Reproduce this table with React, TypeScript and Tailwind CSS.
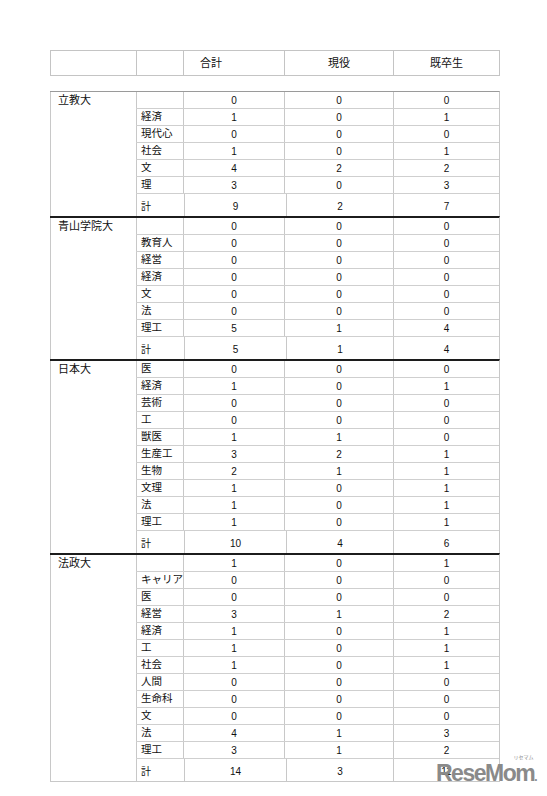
import React from "react";

type Row = [string, number, number, number];

type Section = {
  name: string;
  rows: Row[];
  total: [number, number, number];
};

const sections: Section[] = [
  {
    name: "立教大",
    rows: [
      ["", 0, 0, 0],
      ["経済", 1, 0, 1],
      ["現代心", 0, 0, 0],
      ["社会", 1, 0, 1],
      ["文", 4, 2, 2],
      ["理", 3, 0, 3],
    ],
    total: [9, 2, 7],
  },
  {
    name: "青山学院大",
    rows: [
      ["", 0, 0, 0],
      ["教育人", 0, 0, 0],
      ["経営", 0, 0, 0],
      ["経済", 0, 0, 0],
      ["文", 0, 0, 0],
      ["法", 0, 0, 0],
      ["理工", 5, 1, 4],
    ],
    total: [5, 1, 4],
  },
  {
    name: "日本大",
    rows: [
      ["医", 0, 0, 0],
      ["経済", 1, 0, 1],
      ["芸術", 0, 0, 0],
      ["工", 0, 0, 0],
      ["獣医", 1, 1, 0],
      ["生産工", 3, 2, 1],
      ["生物", 2, 1, 1],
      ["文理", 1, 0, 1],
      ["法", 1, 0, 1],
      ["理工", 1, 0, 1],
    ],
    total: [10, 4, 6],
  },
  {
    name: "法政大",
    rows: [
      ["", 1, 0, 1],
      ["キャリア", 0, 0, 0],
      ["医", 0, 0, 0],
      ["経営", 3, 1, 2],
      ["経済", 1, 0, 1],
      ["工", 1, 0, 1],
      ["社会", 1, 0, 1],
      ["人間", 0, 0, 0],
      ["生命科", 0, 0, 0],
      ["文", 0, 0, 0],
      ["法", 4, 1, 3],
      ["理工", 3, 1, 2],
    ],
    total: [14, 3, 11],
  },
];

const font = { fontFamily: '"Liberation Sans", "Noto Sans CJK JP", sans-serif' };

const SectionBlock = ({ section, index }: { section: Section; index: number }) => {
  const first = index === 0;
  const last = index === sections.length - 1;
  return (
    <div
      className={`flex w-[450px] border-r border-[#c8c8c8] ${
        first ? "border-t border-t-[#9a9a9a]" : "border-t-2 border-t-[#1c1c1c]"
      } ${last ? "border-b border-b-[#c8c8c8]" : ""}`}
    >
      <div className="w-[86px] border-l border-[#c8c8c8] pl-[7px]">
        <div className="h-[17px] flex items-center text-[11px] text-[#111]">{section.name}</div>
      </div>
      <div className="flex-1">
        {section.rows.map((row, i) => (
          <div key={i} className="flex h-[17px] border-b border-[#cfcfcf] text-[#111]">
            <div className="w-[47px] border-l border-[#c8c8c8] pl-[4px] flex items-center text-[10.5px]">
              {row[0]}
            </div>
            <div className="w-[101px] border-l border-[#c8c8c8] flex items-center justify-center text-[10px]">
              {row[1]}
            </div>
            <div className="w-[109px] border-l border-[#c8c8c8] flex items-center justify-center text-[10px]">
              {row[2]}
            </div>
            <div className="flex-1 border-l border-[#c8c8c8] flex items-center justify-center text-[10px]">
              {row[3]}
            </div>
          </div>
        ))}
        <div className="flex h-[22px] text-[#111]">
          <div className="w-[48px] border-l border-[#c8c8c8] pl-[4px] pt-[3px] flex items-center text-[10px]">
            計
          </div>
          <div className="w-[102px] border-l border-[#c8c8c8] pt-[3px] flex items-center justify-center text-[10px]">
            {section.total[0]}
          </div>
          <div className="w-[107px] border-l border-[#c8c8c8] pt-[3px] flex items-center justify-center text-[10px]">
            {section.total[1]}
          </div>
          <div className="flex-1 border-l border-[#c8c8c8] pt-[3px] flex items-center justify-center text-[10px]">
            {section.total[2]}
          </div>
        </div>
      </div>
    </div>
  );
};

export default function App() {
  return (
    <div className="relative w-[547px] h-[796px] overflow-hidden bg-white" style={font}>
      <div className="pt-[50px] pl-[50px]">
        <div className="flex w-[450px] h-[26px] border border-[#c4c4c4] text-[11px] text-[#111]">
          <div className="w-[85px]" />
          <div className="w-[47px] border-l border-[#c4c4c4]" />
          <div className="w-[101px] border-l border-[#c4c4c4] pl-[16px] flex items-center">合計</div>
          <div className="w-[109px] border-l border-[#c4c4c4] flex items-center justify-center">現役</div>
          <div className="flex-1 border-l border-[#c4c4c4] flex items-center justify-center">既卒生</div>
        </div>

        <div className="mt-[15px]">
          {sections.map((s, i) => (
            <SectionBlock key={s.name} section={s} index={i} />
          ))}
        </div>
      </div>

      {/* watermark */}
      <div className="absolute left-[436px] top-[762px] text-[#8a8a8a]">
        <div className="relative text-[23px] font-bold leading-none tracking-[-1.5px]">
          ReseMom<span className="text-[12px] tracking-normal">.</span>
          <span className="absolute right-[4px] -top-[7px] text-[5px] font-normal tracking-normal">
            リセマム
          </span>
        </div>
      </div>
    </div>
  );
}
